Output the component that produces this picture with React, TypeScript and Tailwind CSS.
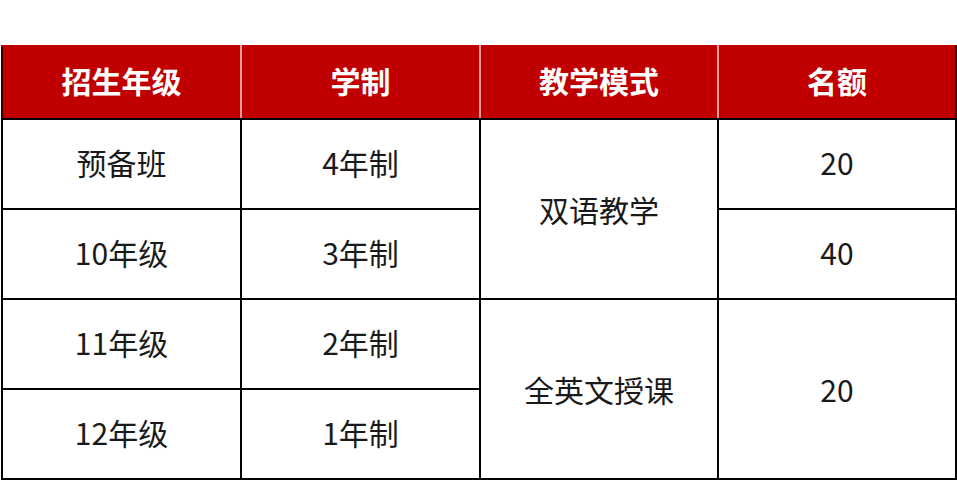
import React from "react";

const font = { fontFamily: '"Noto Sans CJK SC", "Microsoft YaHei", sans-serif' };

export default function App() {
  const base = "border-2 border-black text-center align-middle text-[30px] leading-none text-[#1a1a1a] font-normal";
  const td = `${base} pb-[5px]`;
  const tdSpan = `${base} pb-[1px]`;
  const th = "text-center align-middle text-[30px] leading-none text-white font-bold bg-[#c00000] border-t-2 border-b-2 border-t-[#c00000] border-b-black pb-[5px]";
  return (
    <div className="w-[957px] h-[493px] bg-white pt-[45px] pl-[1px]" style={font}>
      <table className="border-collapse table-fixed w-[954px]">
        <colgroup>
          <col className="w-[239px]" />
          <col className="w-[239px]" />
          <col className="w-[238px]" />
          <col className="w-[238px]" />
        </colgroup>
        <thead>
          <tr className="h-[73px]">
            <th className={`${th} border-l-2 border-l-[#3a0000] border-r-2 border-r-[#f4a0a0]`}>招生年级</th>
            <th className={`${th} border-r-2 border-r-[#f4a0a0]`}>学制</th>
            <th className={`${th} border-r-2 border-r-[#f4a0a0]`}>教学模式</th>
            <th className={`${th} border-r-2 border-r-[#3a0000]`}>名额</th>
          </tr>
        </thead>
        <tbody>
          <tr className="h-[90px]">
            <td className={td}>预备班</td>
            <td className={td}>4年制</td>
            <td className={tdSpan} rowSpan={2}>双语教学</td>
            <td className={td}>20</td>
          </tr>
          <tr className="h-[90px]">
            <td className={td}>10年级</td>
            <td className={td}>3年制</td>
            <td className={td}>40</td>
          </tr>
          <tr className="h-[90px]">
            <td className={td}>11年级</td>
            <td className={td}>2年制</td>
            <td className={tdSpan} rowSpan={2}>全英文授课</td>
            <td className={tdSpan} rowSpan={2}>20</td>
          </tr>
          <tr className="h-[90px]">
            <td className={td}>12年级</td>
            <td className={td}>1年制</td>
          </tr>
        </tbody>
      </table>
    </div>
  );
}
